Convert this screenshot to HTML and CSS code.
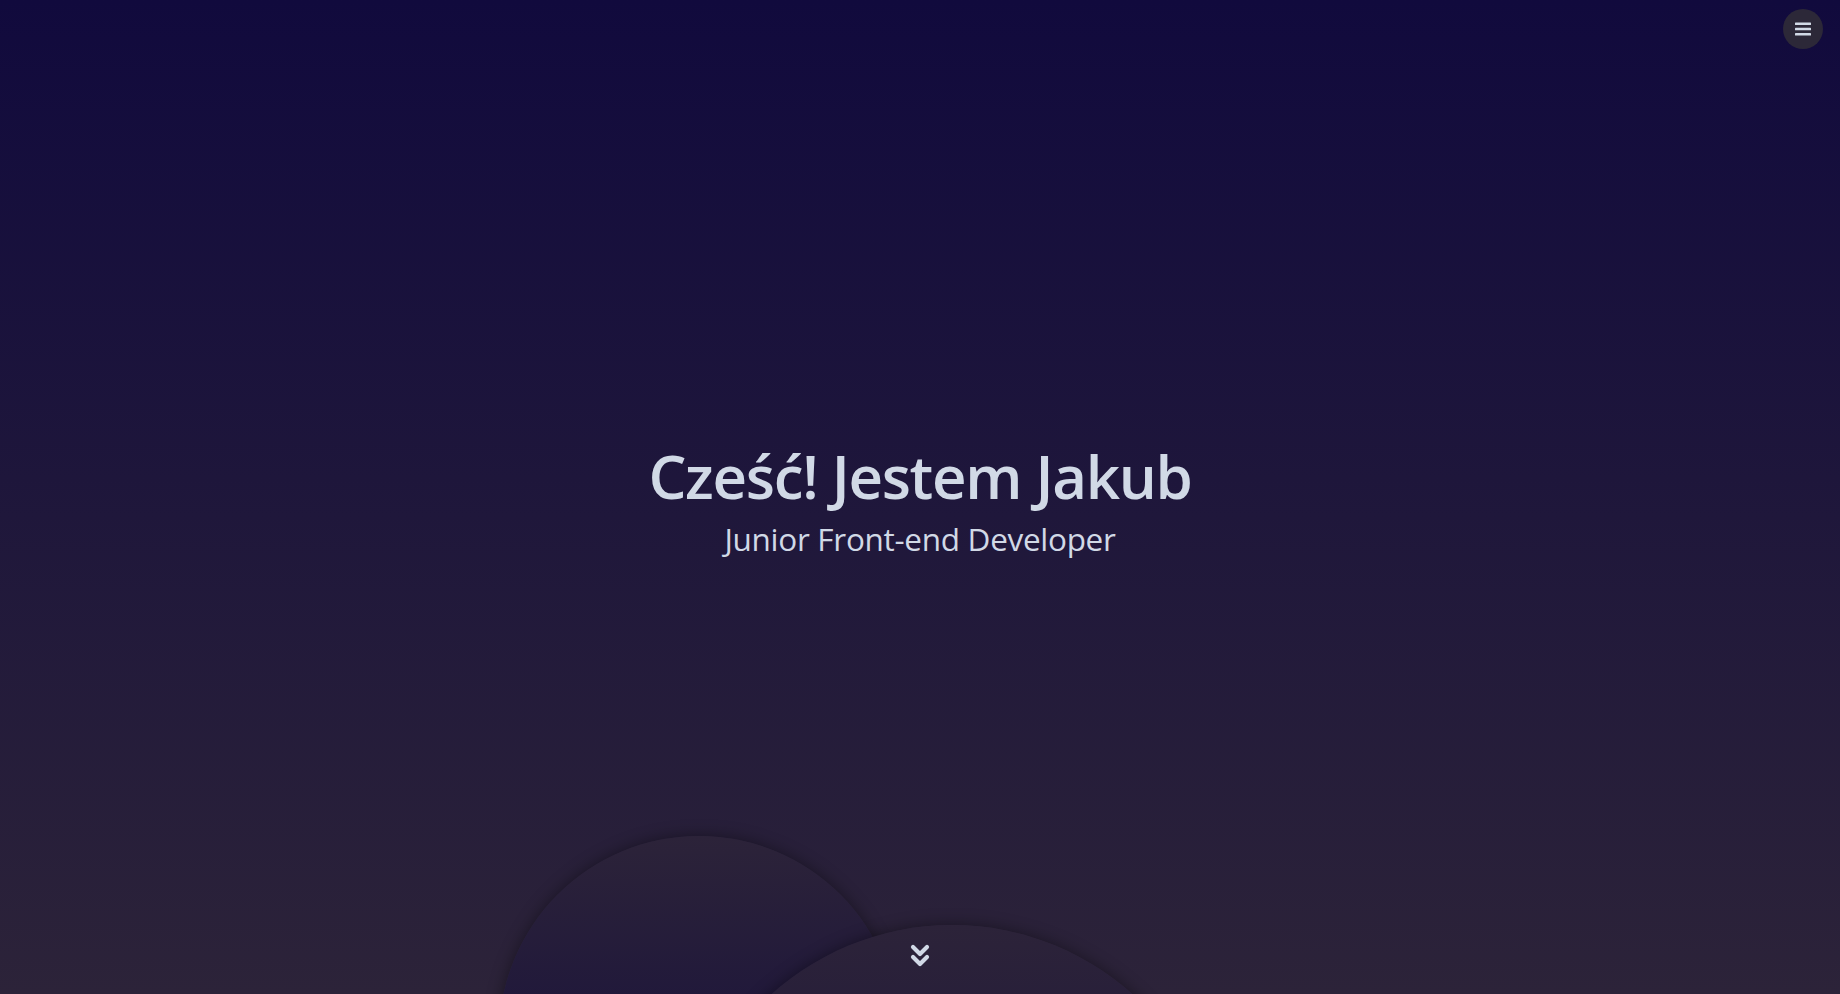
FILE: index.html
```html
<!DOCTYPE html>
<html lang="pl">
<head>
<meta charset="utf-8">
<title>Jakub - Junior Front-end Developer</title>
<link rel="stylesheet" href="styles.css">
</head>
<body>
<header class="topbar">
  <button class="menu-btn" aria-label="Menu">
    <svg class="menu-icon" viewBox="0 0 16 14" width="16" height="14" aria-hidden="true">
      <rect x="0" y="0.5" width="16" height="2.6" rx="0.6"/>
      <rect x="0" y="5.7" width="16" height="2.6" rx="0.6"/>
      <rect x="0" y="10.9" width="16" height="2.6" rx="0.6"/>
    </svg>
  </button>
</header>
<main class="hero">
  <div class="hero-text">
    <h1 class="hero-title">Cześć! Jestem Jakub</h1>
    <p class="hero-subtitle">Junior Front-end Developer</p>
  </div>
  <div class="blob blob-one"></div>
  <div class="blob blob-two"></div>
  <a class="scroll-down" href="#" aria-label="Przewiń w dół">
    <svg viewBox="0 0 20 24" width="20" height="24" aria-hidden="true">
      <path d="M3 3 L10 10 L17 3" />
      <path d="M3 13 L10 20 L17 13" />
    </svg>
  </a>
</main>
</body>
</html>
```

FILE: styles.css
```css
* { box-sizing: border-box; }

html, body {
  margin: 0;
  padding: 0;
  height: 100%;
}

body {
  font-family: "Open Sans", "Noto Sans", sans-serif;
  color: #d1d9e6;
  background: linear-gradient(to bottom, #110a3d 0%, #2c2339 100%);
  overflow: hidden;
}

.topbar {
  position: fixed;
  top: 9px;
  right: 17px;
  z-index: 10;
}

.menu-btn {
  width: 40px;
  height: 40px;
  border-radius: 50%;
  border: none;
  padding: 0;
  background: #2c2838;
  display: flex;
  align-items: center;
  justify-content: center;
  cursor: pointer;
}

.menu-icon { fill: #d1d9e6; display: block; }

.hero {
  position: relative;
  height: 994px;
  display: flex;
  align-items: center;
  justify-content: center;
  overflow: hidden;
}

.hero-text {
  text-align: center;
  position: relative;
  z-index: 2;
  margin-top: 6px;
}

.hero-title {
  margin: 0;
  font-size: 60px;
  font-weight: 600;
  line-height: 1.15;
  letter-spacing: -1.3px;
  color: #d1d9e6;
}

.hero-subtitle {
  margin: 8px 0 0;
  font-size: 31.5px;
  font-weight: 400;
  line-height: 1.25;
  letter-spacing: -0.3px;
  color: #d1d9e6;
}

.blob {
  position: absolute;
  border-radius: 50%;
  background: linear-gradient(to bottom, #2c2339 0%, #110a3d 100%);
  box-shadow: 0 0 16px rgba(0, 0, 0, 0.4);
}

.blob-one {
  width: 400px;
  height: 400px;
  left: 499px;
  top: 836px;
  z-index: 1;
}

.blob-two {
  width: 540px;
  height: 540px;
  left: 682px;
  top: 925px;
  z-index: 1;
}

.scroll-down {
  position: absolute;
  left: 910px;
  top: 944px;
  width: 20px;
  height: 24px;
  z-index: 3;
  display: block;
}

.scroll-down svg { display: block; }

.scroll-down path {
  fill: none;
  stroke: #d1d9e6;
  stroke-width: 4.2;
  stroke-linecap: round;
  stroke-linejoin: round;
}
```
